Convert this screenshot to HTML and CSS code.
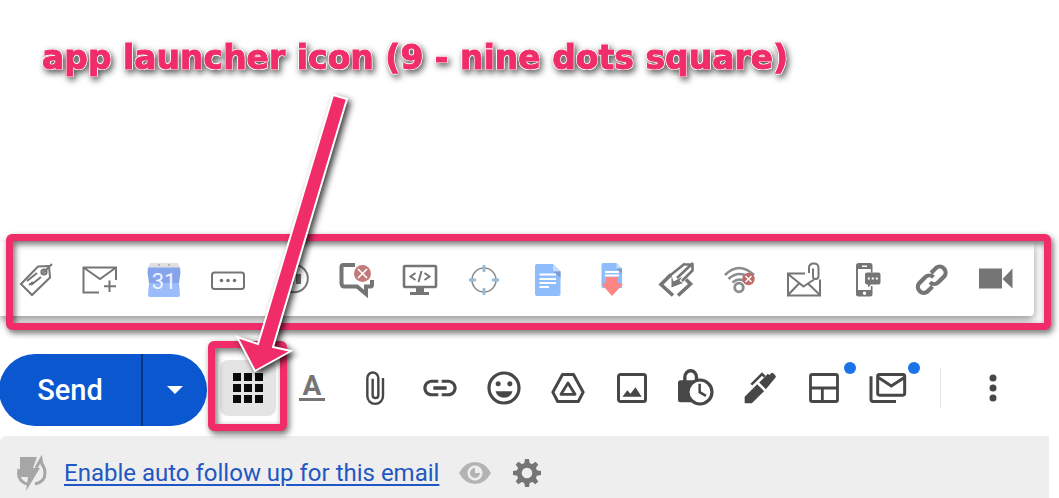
FILE: index.html
```html
<!DOCTYPE html>
<html lang="en">
<head>
<meta charset="utf-8">
<title>Compose toolbar</title>
<link rel="stylesheet" href="styles.css">
</head>
<body>
<main class="compose">
  <h1 class="callout">app launcher icon (9 - nine dots square)</h1>

  <section class="launcher" aria-label="Apps">
    <div class="launcher-panel">
      <button class="app" aria-label="Tag"><svg class="app-icon line" viewBox="0 0 36 36"><path d="M3 23 20 5.500 31 5 32 16.500 14 34zM9 20 19 12M13 24l10-8M11 24l4-3"/><circle cx="26" cy="11" r="2.600"/><path d="m25 12 9-9"/></svg></button>
      <button class="app" aria-label="New message"><svg class="app-icon line" viewBox="0 0 36 36"><path d="M17 31.500H1.500v-25H34V19M1.500 6.500 18 18 34 6.500M27.500 19.500v11.500M22 25.200h12"/></svg></button>
      <button class="app" aria-label="Calendar"><svg class="app-icon" viewBox="0 0 36 36"><path fill="#e0e0e0" d="M4 2h28l2 5H2z"/><path fill="#b8b8b8" d="M12 3h2v2h-2zM22 3h2v2h-2z"/><path fill="#86a4ec" d="M2 6.500h32l.5 5L33 22H3L1.500 11.500z"/><path fill="#9abcfb" d="M3 22h30l1 12q0 2-2 2H4q-2 0-2-2z"/><text class="cal-day" x="18" y="28">31</text></svg></button>
      <button class="app" aria-label="Snippets"><svg class="app-icon line" viewBox="0 0 36 36"><rect x="2" y="11.500" width="32" height="16.500" rx="2.500"/><g class="solid"><circle cx="11.500" cy="19.500" r="1.800"/><circle cx="18" cy="19.500" r="1.800"/><circle cx="24.500" cy="19.500" r="1.800"/></g></svg></button>
      <button class="app" aria-label="Pause"><svg class="app-icon line" viewBox="0 0 36 36"><circle cx="20" cy="17.500" r="13.800"/><path class="solid" d="M15 13h5v10h-5zM22 13h5v10h-5z"/></svg></button>
      <button class="app" aria-label="No comments"><svg class="app-icon" viewBox="0 0 36 36"><path class="line" stroke-width="4" d="M17 4H5.500Q3.500 4 3.500 6v16q0 3.500 3 3.500H19l9 7.500v-7.500h4.500q1.500 0 1.500-2V19"/><circle cx="24.500" cy="12.500" r="8.500" fill="#c27a7a"/><path d="m20 8 9 9m0-9-9 9" stroke="#fff" stroke-width="1.600"/></svg></button>
      <button class="app" aria-label="Source code"><svg class="app-icon" viewBox="0 0 36 36"><rect class="line" x="2" y="5" width="32" height="21" rx="1" stroke-width="2.600"/><path class="line" stroke-width="2" d="m13.500 12-5 3.500 5 3.500m9-7 5 3.500-5 3.500m-3-9-3 11"/><path class="solid" d="M14 27h8v4h5v3H8v-3h6z"/></svg></button>
      <button class="app" aria-label="Target"><svg class="app-icon" viewBox="0 0 36 36"><circle class="line pale" cx="18" cy="19" r="12" stroke-width="1.600"/><path d="M18 4v7m0 16v7M3 19h7m16 0h7" stroke="#9ab9d3" stroke-width="2.800"/></svg></button>
      <button class="app" aria-label="Document"><svg class="app-icon" viewBox="0 0 36 36"><path fill="#8fbcfb" d="M7 3h16l7.500 7.500V33q0 2-2 2H7q-2 0-2-2V5q0-2 2-2z"/><path fill="#c6dcfa" d="M23 3v7.500h7.500z"/><path fill="#789fcf" d="M23 10.500h7.500V17z"/><path d="M9.500 13.500H26m-16.500 4.500H26M9.500 22H26M9.500 26h9.500" stroke="#fff" stroke-width="2"/></svg></button>
      <button class="app" aria-label="Save document"><svg class="app-icon" viewBox="0 0 36 36"><path fill="#8fbcfb" d="M9 2h13.500l5.500 5.500V27H9q-1.500 0-1.500-2V4Q7.500 2 9 2z"/><path fill="#c6dcfa" d="M22.500 2v5.500H28z"/><path fill="#789fcf" d="M22.500 7.500H28V13z"/><path d="M11 11h14m-14 3.500h14" stroke="#fff" stroke-width="1.800"/><path fill="#fd8583" d="M12 16h12v6l5 1-11 12L7.500 23l4.500-1z"/></svg></button>
      <button class="app" aria-label="Pick"><svg class="app-icon" viewBox="0 0 36 36"><path class="line" stroke-width="3.600" d="M15 34.500 3 23.500 13 13.500M20 34.500l12.500-11.500-4.500-4.500"/><path class="line" stroke-width="2.600" d="M12 14.500 27 2.500M19 17 35 2M24 20 35 9M27 3.500h7.500V10"/><path class="solid" d="m13.500 14.500 2 6L24 16l-2.500 4 3.500 2-11.500 4.500z"/></svg></button>
      <button class="app" aria-label="Offline"><svg class="app-icon" viewBox="0 0 36 36"><path class="line pale" stroke-width="2.600" d="M3 14q14-14 29 0M6.500 18q11-10 22 0M10.500 21.500q7-6 14 0"/><circle class="line pale" stroke-width="2.800" cx="17" cy="26.500" r="4.300"/><circle fill="#c06b6b" cx="26.500" cy="18" r="6.200"/><path d="m23.500 15 6 6m0-6-6 6" stroke-width="1.400" stroke="#fff"/></svg></button>
      <button class="app" aria-label="Attach email"><svg class="app-icon line" viewBox="0 0 36 36"><path d="M19 12.500H2v22h32V18.500M2 13l15.500 12.500 6-4M2 34l11.500-12M34 34 22.500 23M17.500 25.500 28 18.500"/><path d="M23 12V7q0-4.500 4.800-4.500T32.500 7v8q0 3-2.800 3T27 15V7.500"/></svg></button>
      <button class="app" aria-label="Text message"><svg class="app-icon" viewBox="0 0 36 36"><path class="solid" fill-rule="evenodd" d="M8.500 2H20q2.500 0 2.500 2.500v7h-1.700V8H8v21h12.800v-4h1.700v8q0 2.500-2.500 2.500H8.500Q6 35.500 6 33V4.500Q6 2 8.500 2zM12 4.500V6h5V4.500zM14.500 30.500a1.700 1.700 0 1 0 .01 0z"/><path class="solid" d="M17 11.500h11.500q2 0 2 2v8q0 2-2 2H21l-3 3v-3h-1q-2 0-2-2v-8q0-2 2-2z"/><path d="M17.800 17.500h2m2 0h2m2 0h2" stroke="#fff" stroke-width="2"/></svg></button>
      <button class="app" aria-label="Link"><svg class="app-icon" viewBox="0 0 36 36"><path class="line" stroke-width="4.200" d="m17 12 5-5a5.900 5.900 0 0 1 8.300 8.300l-6 6a5.900 5.900 0 0 1-8.300 0M18.500 25.500l-5 5a5.900 5.900 0 0 1-8.300-8.300l6-6a5.900 5.900 0 0 1 8.300 0"/></svg></button>
      <button class="app" aria-label="Video"><svg class="app-icon" viewBox="0 0 36 36"><path class="solid" d="M1 7.500h23V27.500H1zM34.500 7.500v20L24.500 18z"/></svg></button>
    </div>
    <span class="frame frame-launcher"></span>
  </section>

  <div class="toolbar">
    <div class="send-group">
      <button class="send">Send</button>
      <button class="send-more" aria-label="More send options"><svg class="caret" viewBox="0 0 16 8"><path d="M0 0h16L8 8z"/></svg></button>
    </div>
    <div class="tools">
      <button class="tool" aria-label="App launcher"><span class="tool-active"><svg class="tool-icon" viewBox="0 0 40 40"><path fill="#0b0b0b" d="M5 5h8v8H5zm11 0h8v8h-8zm11 0h8v8h-8zM5 16h8v8H5zm11 0h8v8h-8zm11 0h8v8h-8zM5 27h8v8H5zm11 0h8v8h-8zm11 0h8v8h-8z"/></svg></span><span class="frame frame-tool"></span></button>
      <button class="tool" aria-label="Formatting"><svg class="tool-icon" viewBox="0 0 40 40"><text class="format-a" x="20" y="27">A</text><path fill="#757575" d="M7 30h26v3H7z"/></svg></button>
      <button class="tool" aria-label="Attach files"><svg class="tool-icon line" viewBox="0 0 24 24"><path stroke-width="1.450" d="M16.200 6v10.800a4.700 4.700 0 0 1-9.400 0V6a3.300 3.300 0 0 1 6.600 0v10.300a1.700 1.700 0 0 1-3.400 0V6.500"/></svg></button>
      <button class="tool" aria-label="Insert link"><svg class="tool-icon" viewBox="0 0 24 24"><path d="M3.900 12c0-1.710 1.390-3.100 3.100-3.100h4V7H7c-2.760 0-5 2.240-5 5s2.240 5 5 5h4v-1.900H7c-1.710 0-3.100-1.390-3.100-3.100zM8 13h8v-2H8v2zm9-6h-4v1.900h4c1.710 0 3.100 1.390 3.100 3.100s-1.390 3.100-3.100 3.100h-4V17h4c2.760 0 5-2.240 5-5s-2.240-5-5-5z"/></svg></button>
      <button class="tool" aria-label="Insert emoji"><svg class="tool-icon" viewBox="0 0 24 24"><circle class="line" cx="12" cy="12" r="9" stroke-width="1.900"/><circle cx="8.500" cy="9.500" r="1.500"/><circle cx="15.500" cy="9.500" r="1.500"/><path d="M6.900 14h10.200a5.300 5.300 0 0 1-10.200 0z"/></svg></button>
      <button class="tool" aria-label="Insert from Drive"><svg class="tool-icon line" viewBox="0 0 24 24"><path stroke-width="1.800" stroke-linejoin="round" d="M8.700 3.900h6.600L21.100 14.500 18.200 20.100H5.800L2.900 14.500z"/><path stroke-width="1.700" stroke-linejoin="round" d="M12 9 7.800 15.800h8.400z"/></svg></button>
      <button class="tool" aria-label="Insert photo"><svg class="tool-icon" viewBox="0 0 24 24"><rect class="line" x="3.900" y="3.900" width="16.200" height="16.200" rx="1.200" stroke-width="1.800"/><path d="m6.300 17.200 2.900-3.800 1.900 2.100 3-3.900 3.700 5.600z"/></svg></button>
      <button class="tool" aria-label="Confidential mode"><svg class="tool-icon" viewBox="0 0 24 24"><path class="line" stroke-width="2" d="M5.300 8V5.500a3 3.300 0 0 1 7 0V8"/><rect x="1.200" y="7.300" width="14" height="13.200" rx="1.500"/><circle class="line halo" cx="14.400" cy="14.400" r="7.200" stroke-width="1.900"/><path class="line" stroke-width="1.500" d="M14.200 9.500v5l3.800 2.200"/></svg></button>
      <button class="tool" aria-label="Insert signature"><svg class="tool-icon" viewBox="0 0 24 24"><path d="M2.800 17.300 10.300 9.800l4.200 4.100-7.400 7.300H2.800zM11.500 8.700l5.200-5.200 1 .7 1-1.100q.7-.6 1.300 0l1.200 1.400q.6.700 0 1.400l-5.700 6.800z"/><path class="line" stroke-width="1.500" d="m6.800 10 6.400-6.400 1.600 1.600"/></svg></button>
      <button class="tool" aria-label="Select a layout"><svg class="tool-icon line" viewBox="0 0 24 24"><path stroke-width="1.700" d="M5 3.900h14q1.100 0 1.100 1.100v14q0 1.100-1.100 1.100H5q-1.100 0-1.100-1.100V5q0-1.100 1.100-1.100zM4 12h16M11 12v8"/></svg><span class="badge"></span></button>
      <button class="tool" aria-label="Mail merge"><svg class="tool-icon line" viewBox="0 0 24 24"><path stroke-width="1.800" d="M6.900 3.900h14q1.100 0 1.100 1.100v10.200q0 1.100-1.100 1.100h-14q-1.100 0-1.100-1.100V5q0-1.100 1.100-1.100zM6 5.500l8 5.300 8-5.300M1.800 5v13.800q0 1.300 1.300 1.300H16.800"/></svg><span class="badge"></span></button>
    </div>
    <span class="divider"></span>
    <button class="tool" aria-label="More options"><svg class="tool-icon" viewBox="0 0 24 24"><circle cx="12" cy="6" r="2.100"/><circle cx="12" cy="12" r="2.100"/><circle cx="12" cy="18" r="2.100"/></svg></button>
  </div>

  <footer class="followup">
    <svg class="bolt" viewBox="0 0 32 36"><path class="ring" d="M3 14q-2 9 4 13 2 2 5 2M19 29q10-2 10-11 0-5-3-9l-1-5-5 9"/><path d="M4 2h17l-4 11h7L10 36l2-14H4z"/></svg>
    <a class="followup-link" href="#">Enable auto follow up for this email</a>
    <svg class="eye" viewBox="0 0 32 22"><path fill-rule="evenodd" d="M0 11Q6 0 16 0t16 11Q26 22 16 22T0 11zm16-7.500a7.500 7.500 0 1 0 .01 0z"/><path fill-rule="evenodd" d="M16 6a5 5 0 1 0 5 5h-5z"/></svg>
    <svg class="gear" viewBox="0 0 28 28"><g id="teeth"><path d="M12 0h4l1 6h-6zM12 28h4l1-6h-6zM0 12v4l6 1v-6zM28 12v4l-6 1v-6z"/></g><use href="#teeth" transform="rotate(45 14 14)"/><circle class="gear-ring" cx="14" cy="14" r="7.800"/></svg>
  </footer>

  <svg class="arrow" viewBox="0 0 64 284"><path d="M97 3 111 7 37 255 55 259 19 279 1 245 22 252z"/></svg>
</main>
</body>
</html>
```
FILE: styles.css
```css
* { box-sizing: border-box; }

body {
  margin: 0;
  background: #fff;
  font-family: Roboto, "Liberation Sans", sans-serif;
  overflow: hidden;
}

button {
  border: 0;
  padding: 0;
  background: none;
  font: inherit;
  cursor: pointer;
}

svg { display: block; overflow: visible; }

.compose {
  position: relative;
  display: flex;
  flex-direction: column;
  min-height: 100vh;
}

.callout {
  margin: 0;
  padding: 34px 42px 0;
  height: 242px;
  font-family: "DejaVu Sans", Inter, sans-serif;
  font-size: 33px;
  font-weight: 700;
  line-height: 48px;
  white-space: nowrap;
  color: #f02d68;
  -webkit-text-stroke: 1px #f02d68;
  text-shadow:
    -1px -1px 0 #fff, 1px -1px 0 #fff, -1px 1px 0 #fff, 1px 1px 0 #fff,
    -1px 0 0 #fff, 1px 0 0 #fff, 0 -1px 0 #fff, 0 1px 0 #fff;
  filter: drop-shadow(2px 3px 3px rgba(0, 0, 0, .65));
}

.launcher { position: relative; padding-right: 25px; }

.launcher-panel {
  display: flex;
  height: 74px;
  padding-left: 4px;
  background: #fff;
  border-radius: 0 0 4px 0;
  box-shadow: 0 4px 10px rgba(0, 0, 0, .42);
}

.app {
  display: flex;
  align-items: center;
  justify-content: center;
  width: 64px;
}

.app-icon { width: 36px; height: 36px; fill: none; stroke-width: 2; }
.app-icon .line, .app-icon.line { fill: none; stroke: #757575; }
.app-icon .pale { stroke: #8a8d90; }
.app-icon .solid { fill: #757575; stroke: none; }

.cal-day {
  fill: #eef3ff;
  font-size: 22px;
  text-anchor: middle;
}

.frame {
  position: absolute;
  border: 7px solid #f02d68;
  border-radius: 6px;
  filter: drop-shadow(2px 3px 3px rgba(0, 0, 0, .6));
  pointer-events: none;
}

.frame-launcher { inset: -8px 8px -14px 6px; }
.frame-tool { inset: -19px -7px -15px -8px; }

.toolbar {
  display: flex;
  align-items: center;
  margin-top: 20px;
  padding: 14px 0 10px;
}

.send-group {
  display: flex;
  align-self: flex-end;
  width: 208px;
  height: 72px;
  margin-left: -1px;
  margin-right: 9px;
  border-radius: 36px;
  overflow: hidden;
  background: #0b57d0;
}

.send {
  flex: 1;
  color: #fff;
  font-size: 29px;
  font-weight: 500;
  border-right: 2px solid #06367f;
}

.send-more {
  display: flex;
  align-items: center;
  justify-content: center;
  width: 64px;
}

.caret { width: 16px; height: 8px; fill: #fff; }

.tools { display: flex; align-items: center; height: 76px; }

.tool {
  position: relative;
  display: flex;
  flex: none;
  align-items: center;
  justify-content: center;
  width: 64px;
  height: 56px;
}

.tool-active {
  padding: 8px;
  border-radius: 8px;
  background: #e4e4e4;
}

.tool-icon { width: 40px; height: 40px; fill: #474747; }
.tool-icon.line, .tool-icon .line { fill: none; stroke: #474747; }
.tool-icon .line.halo { fill: #fff; }

.format-a {
  fill: #757575;
  font-size: 28px;
  font-weight: 700;
  text-anchor: middle;
}

.badge {
  position: absolute;
  top: 2px;
  right: 0;
  width: 12px;
  height: 12px;
  border-radius: 50%;
  background: #1a73e8;
}

.divider {
  width: 1px;
  height: 40px;
  margin: 0 20px;
  background: #dfe2e6;
}

.followup {
  display: flex;
  flex: 1;
  align-items: center;
  margin-right: 10px;
  padding: 12px 16px 0;
  border-radius: 6px 0 0 0;
  background: #eee;
}

.bolt { width: 32px; height: 36px; fill: #a6a6a6; }
.ring { fill: none; stroke: #a6a6a6; stroke-width: 3; }

.followup-link {
  margin: 0 20px 0 16px;
  font-size: 24px;
  line-height: 32px;
  color: #1f57c4;
  text-decoration-thickness: 2px;
  text-underline-offset: 3px;
}

.eye { width: 32px; height: 22px; fill: #b3b3b3; }
.gear { width: 28px; height: 28px; margin-left: 22px; fill: #757575; }
.gear-ring { fill: none; stroke: #757575; stroke-width: 5; }

.arrow {
  position: absolute;
  left: 236px;
  top: 92px;
  width: 64px;
  height: 284px;
  fill: #f02d68;
  stroke: #fff;
  stroke-width: 2;
  filter: drop-shadow(3px 3px 3px rgba(0, 0, 0, .75));
  pointer-events: none;
}
```
